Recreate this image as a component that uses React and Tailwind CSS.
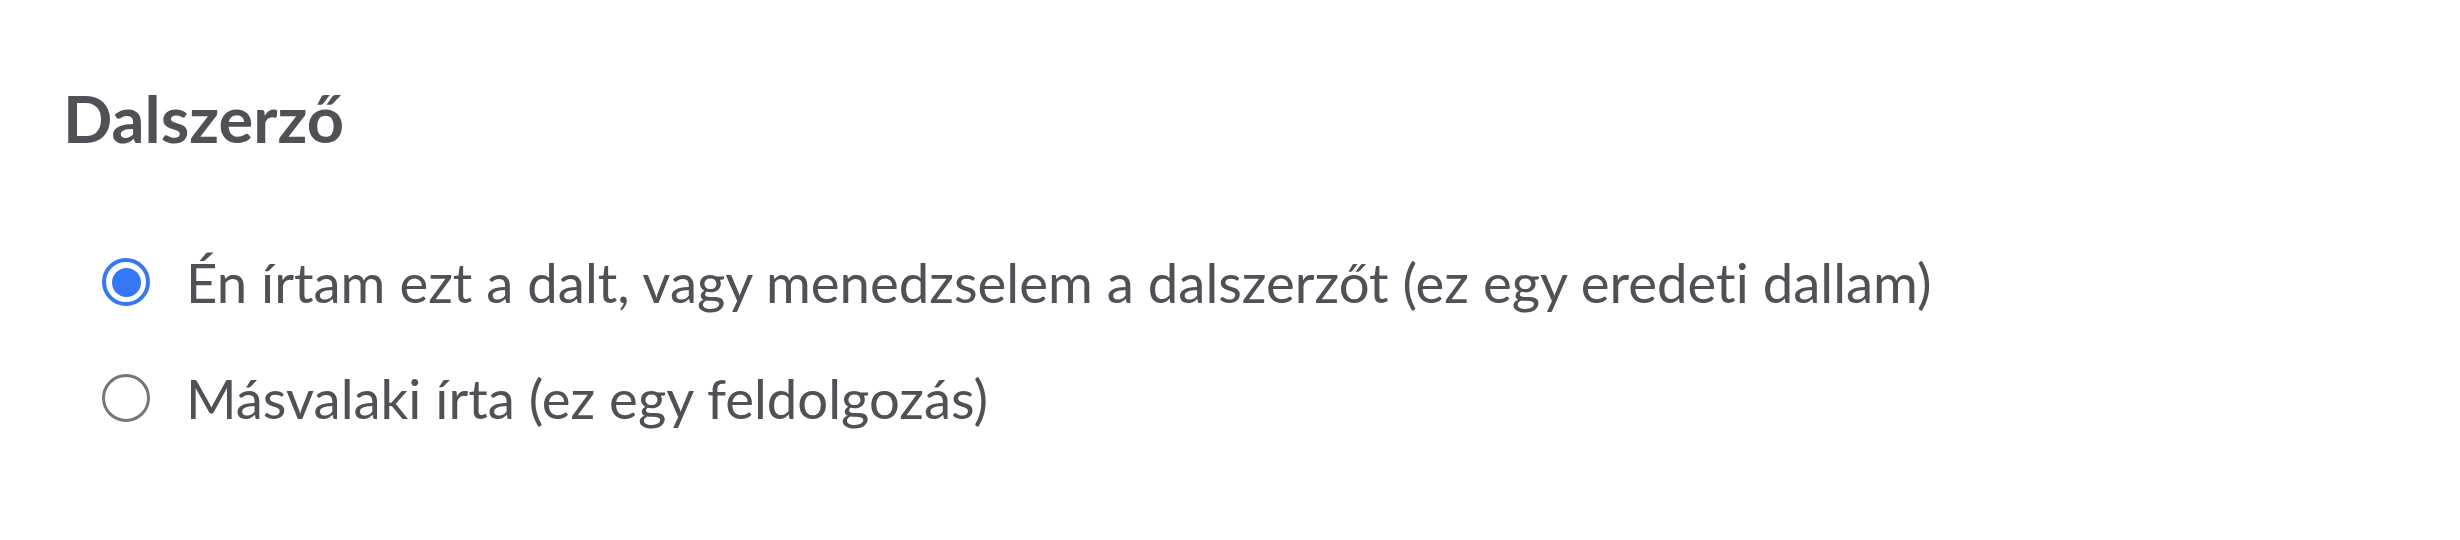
import { useState } from "react";

const options = [
  { id: "original", label: "Én írtam ezt a dalt, vagy menedzselem a dalszerzőt (ez egy eredeti dallam)" },
  { id: "cover", label: "Másvalaki írta (ez egy feldolgozás)" },
];

export default function App() {
  const [value, setValue] = useState("original");

  return (
    <div className="min-h-screen w-full bg-white pt-[79px] pl-[63px] text-[#505056] font-['Lato','Liberation_Sans',sans-serif] [font-variant-ligatures:none]">
      <h2 className="text-[65px] font-bold leading-[78px]">Dalszerző</h2>

      {/* Radio group */}
      <div className="mt-[92px] pl-[39px] flex flex-col gap-[50px]">
        {options.map((opt) => {
          const checked = value === opt.id;
          return (
            <label
              key={opt.id}
              className="flex items-center gap-[36px] h-[66px] cursor-pointer"
              onClick={() => setValue(opt.id)}
            >
              <span
                className={
                  checked
                    ? "w-[48px] h-[48px] rounded-full border-[4px] border-[#3478f6] flex items-center justify-center shrink-0"
                    : "w-[48px] h-[48px] rounded-full border-[3px] border-[#767676] flex items-center justify-center shrink-0"
                }
              >
                {checked && <span className="w-[29px] h-[29px] rounded-full bg-[#3478f6]" />}
              </span>
              <span className="text-[54.5px] leading-[66px] whitespace-nowrap">{opt.label}</span>
            </label>
          );
        })}
      </div>
    </div>
  );
}
